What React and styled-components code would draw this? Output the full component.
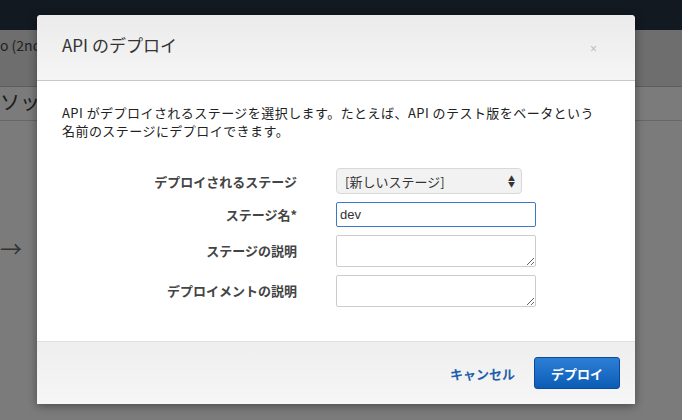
import React from 'react';
import styled, { createGlobalStyle } from 'styled-components';

const Global = createGlobalStyle`
  html, body { margin: 0; padding: 0; }
  body {
    width: 682px; height: 420px; overflow: hidden;
    font-family: "Noto Sans CJK JP", "Liberation Sans", sans-serif;
    background: #7b7b7b;
  }
`;

// Page under the overlay

const Page = styled.div`
  position: relative;
  width: 682px;
  height: 420px;
  overflow: hidden;
`;

const NavBar = styled.div`
  height: 30px;
  background: #131921;
`;

const Crumb = styled.div`
  height: 56px;
  background: #6e6e6e;
  border-bottom: 1px solid #5e5e5e;
  color: #222;
  font-size: 14px;
  line-height: 30px;
  white-space: nowrap;
`;

const Heading = styled.div`
  font-size: 20px;
  color: #1a1a1a;
  padding: 0 0 4px 0;
  border-bottom: 1px solid #666;
  width: 100%;
`;

const Content = styled.div`
  display: flex;
  padding-top: 110px;
  font-size: 22px;
  color: #333;
`;

// Modal

const Overlay = styled.div`
  position: absolute;
  top: 15px;
  left: 37px;
  width: 598px;
  background: #fff;
  border-radius: 4px 4px 0 0;
  box-shadow: 0 2px 10px rgba(0,0,0,0.4);
  overflow: hidden;
`;

const Header = styled.div`
  height: 65px;
  background: linear-gradient(#ebebeb, #f5f5f5);
  border-bottom: 1px solid #c8c8c8;
  display: flex;
  align-items: center;
  justify-content: space-between;
  padding: 0 38px 0 25px;
`;

const Title = styled.h2`
  margin: 0;
  font-weight: normal;
  font-size: 17px;
  color: #333;
  margin-top: -6px;
`;

const Close = styled.span`
  color: #bbb;
  font-size: 12px;
  font-family: "Liberation Sans", sans-serif;
  margin-top: 2px;
`;

const Body = styled.div`
  padding: 23px 30px 0 25px;
  height: 260px;
  box-sizing: border-box;
`;

const Desc = styled.p`
  margin: 0 0 28px;
  font-size: 13px;
  line-height: 18px;
  letter-spacing: 0.45px;
  color: #222;
`;

const Form = styled.div`
  display: grid;
  grid-template-columns: 235px 200px;
  column-gap: 39px;
  row-gap: 8px;
  align-items: center;
`;

const Label = styled.label`
  text-align: right;
  font-size: 13px;
  font-weight: bold;
  color: #444;
  align-self: ${p => (p.top ? 'start' : 'center')};
  padding-top: ${p => (p.top ? '6px' : '0')};
`;

const Select = styled.div`
  width: 186px;
  height: 26px;
  box-sizing: border-box;
  border: 1px solid #d8d8d8;
  border-radius: 4px;
  background: #f2f2f2;
  display: flex;
  align-items: center;
  justify-content: space-between;
  padding: 0 6px 0 8px;
  font-size: 13px;
  color: #333;
`;

const Arrows = styled.span`
  font-size: 7px;
  line-height: 6px;
  display: flex;
  flex-direction: column;
  color: #333;
`;

const Input = styled.input`
  width: 200px;
  height: 25px;
  box-sizing: border-box;
  border: 1px solid #3c78c8;
  border-radius: 2px;
  padding: 0 3px;
  font-size: 13px;
  font-family: "Liberation Sans", sans-serif;
  color: #333;
  outline: none;
`;

const Area = styled.textarea`
  width: 200px;
  height: 32px;
  box-sizing: border-box;
  border: 1px solid #ccc;
  border-radius: 2px;
  resize: vertical;
  display: block;
`;

const Footer = styled.div`
  height: 62px;
  background: linear-gradient(#eeeeee, #f6f6f6);
  border-top: 1px solid #e0e0e0;
  display: flex;
  align-items: center;
  justify-content: flex-end;
  gap: 19px;
  padding-right: 15px;
`;

const Cancel = styled.a`
  color: #1f5fad;
  font-weight: bold;
  font-size: 13px;
  cursor: pointer;
`;

const Primary = styled.button`
  width: 86px;
  height: 32px;
  border: 1px solid #0b4a98;
  border-radius: 3px;
  background: linear-gradient(#2d7fd6, #0a5cb5);
  color: #fff;
  font-weight: bold;
  font-size: 13px;
  font-family: inherit;
`;

export default function App() {
  return (
    <Page>
      <Global />
      <NavBar />
      <Crumb>o (2nd</Crumb>
      <Heading>ソッ</Heading>
      <Content>→</Content>
      <Overlay>
        <Header>
          <Title>API のデプロイ</Title>
          <Close>×</Close>
        </Header>
        <Body>
          <Desc>
            API がデプロイされるステージを選択します。たとえば、API のテスト版をベータという名前のステージにデプロイできます。
          </Desc>
          <Form>
            <Label>デプロイされるステージ</Label>
            <Select>
              [新しいステージ]
              <Arrows><span>▲</span><span>▼</span></Arrows>
            </Select>
            <Label>ステージ名*</Label>
            <Input defaultValue="dev" />
            <Label top>ステージの説明</Label>
            <Area />
            <Label top>デプロイメントの説明</Label>
            <Area />
          </Form>
        </Body>
        <Footer>
          <Cancel>キャンセル</Cancel>
          <Primary>デプロイ</Primary>
        </Footer>
      </Overlay>
    </Page>
  );
}
